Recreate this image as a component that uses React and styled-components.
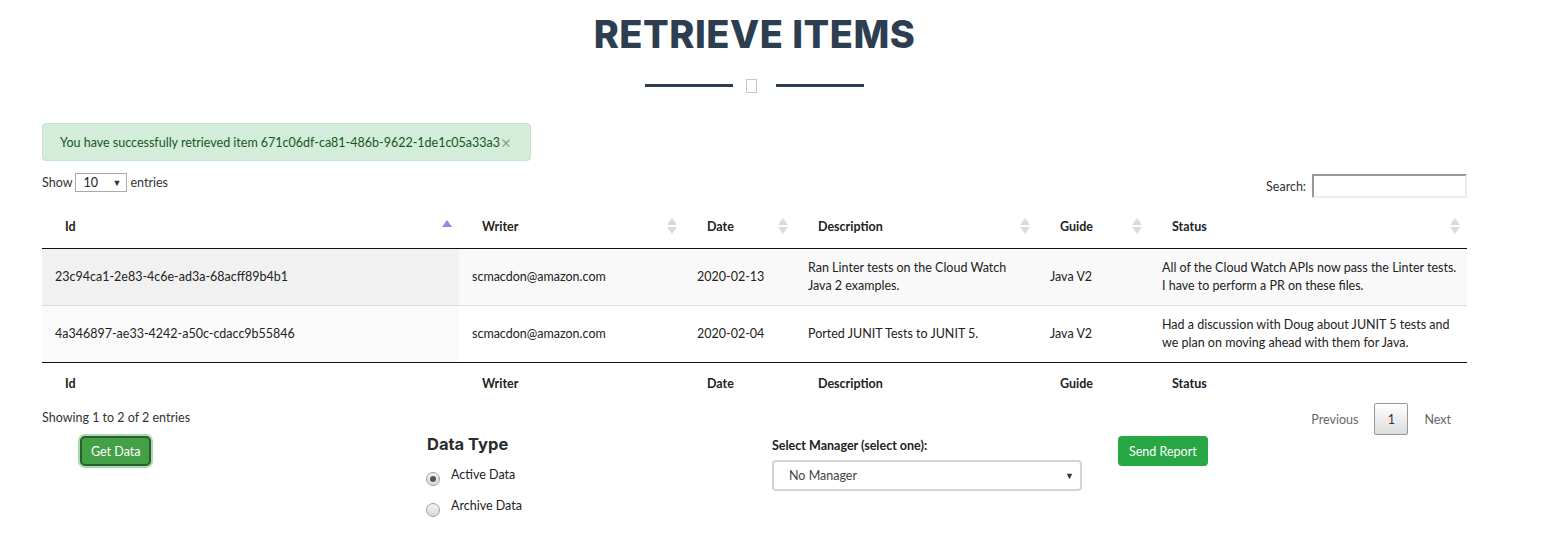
import React from "react";
import styled, { createGlobalStyle } from "styled-components";

const Global = createGlobalStyle`
  html, body { margin: 0; padding: 0; background: #fff; }
  body { font-family: Lato, "Open Sans", sans-serif; font-size: 12.5px; color: #333; }
`;

const Page = styled.div`
  width: 1425px;
  margin-left: 42px;
  padding-top: 12px;
`;

const Title = styled.h1`
  margin: 0;
  text-align: center;
  font-family: Inter, "Open Sans", sans-serif;
  font-weight: 800;
  font-size: 38px;
  line-height: 44px;
  letter-spacing: 0.5px;
  color: #2c3e50;
`;

const Divider = styled.div`
  display: flex;
  justify-content: center;
  align-items: center;
  margin-top: 22px;
  height: 15px;
`;

const Line = styled.span`
  display: block;
  width: 88px;
  height: 3px;
  background: #2c3e50;
`;

const Glyph = styled.span`
  display: block;
  width: 11px;
  height: 14px;
  border: 1px solid #c4c8cc;
  box-sizing: border-box;
  margin: 0 19px 0 13px;
`;

const Alert = styled.div`
  margin-top: 30px;
  width: 489px;
  height: 38px;
  box-sizing: border-box;
  display: flex;
  align-items: center;
  padding: 0 0 0 17px;
  background: #d4edda;
  border: 1px solid #c3e6cb;
  border-radius: 4px;
  color: #155724;
  font-size: 12.5px;
`;

const Close = styled.span`
  color: #8c9990;
  font-size: 17px;
  margin-left: 1px;
  line-height: 1;
  margin-top: 1px;
`;

const Controls = styled.div`
  display: flex;
  justify-content: space-between;
  align-items: flex-start;
  margin-top: 12px;
  height: 32px;
`;

const Length = styled.div`
  display: flex;
  align-items: center;
  gap: 3px;
  color: #333;
`;

const SmallSelect = styled.div`
  width: 52px;
  height: 19px;
  box-sizing: border-box;
  border: 1px solid #a9a9a9;
  display: flex;
  align-items: center;
  justify-content: space-between;
  padding: 0 5px 0 7px;
  color: #222;
  background: #fff;
`;

const Caret = styled.span`
  font-size: 9px;
  color: #333;
`;

const SearchWrap = styled.label`
  display: flex;
  align-items: center;
  gap: 6px;
  margin-top: 1px;
  color: #333;
`;

const SearchInput = styled.div`
  width: 155px;
  height: 24px;
  box-sizing: border-box;
  border-top: 2px solid #9a9a9a;
  border-left: 2px solid #9a9a9a;
  border-right: 2px solid #ececec;
  border-bottom: 2px solid #ececec;
  background: #fff;
`;

const Table = styled.table`
  width: 1425px;
  border-collapse: collapse;
  table-layout: fixed;
  font-size: 12.5px;
`;

const Th = styled.th`
  position: relative;
  text-align: left;
  font-weight: 700;
  color: #222;
  height: 43px;
  padding: 0 18px 0 23px;
  box-sizing: border-box;
  ${(p) => (p.$head ? "border-bottom: 1px solid #111;" : "")}
`;

const SortIcon = styled.span`
  position: absolute;
  right: 6px;
  top: 50%;
  transform: translateY(-50%);
  width: 12px;
  height: 20px;
  display: flex;
  flex-direction: column;
  align-items: center;
  justify-content: center;
  gap: 2px;
`;

const Tri = styled.span`
  width: 0;
  height: 0;
  border-left: 5px solid transparent;
  border-right: 5px solid transparent;
  ${(p) =>
    p.$down
      ? `border-top: 7px solid ${p.$color};`
      : `border-bottom: 7px solid ${p.$color};`}
`;

const Tr = styled.tr`
  background: ${(p) => (p.$odd ? "#f9f9f9" : "#fff")};
  border-bottom: 1px solid ${(p) => (p.$last ? "#111" : "#ddd")};
`;

const Td = styled.td`
  height: 57px;
  padding: 0 6px 0 13px;
  box-sizing: border-box;
  line-height: 18px;
  color: #222;
  vertical-align: middle;
  ${(p) => (p.$sorted ? `background: ${p.$odd ? "#f1f1f1" : "#fafafa"};` : "")}
`;

const Info = styled.div`
  display: flex;
  justify-content: space-between;
  align-items: flex-start;
  height: 26px;
  margin-top: -1px;
`;

const Showing = styled.span`
  margin-top: 6px;
`;

const Pager = styled.div`
  display: flex;
  align-items: center;
  margin-top: -1px;
`;

const PageLink = styled.span`
  color: #666;
  padding: 0 16px;
`;

const PageCurrent = styled.span`
  width: 34px;
  height: 32px;
  box-sizing: border-box;
  display: flex;
  align-items: center;
  justify-content: center;
  border: 1px solid #979797;
  border-radius: 2px;
  background: linear-gradient(#fff, #dcdcdc);
  color: #333;
`;

const Bottom = styled.div`
  display: grid;
  grid-template-columns: repeat(4, 346px);
  margin-left: 38px;
  margin-top: 4px;
  align-items: start;
`;

const Col = styled.div`
  display: flex;
  flex-direction: column;
  align-items: flex-start;
`;

const GetButton = styled.button`
  font-family: Lato, sans-serif;
  font-size: 12.5px;
  color: #fff;
  background: #43a047;
  border: 2px solid #2b5e2d;
  border-radius: 5px;
  height: 30px;
  padding: 0 9px;
  box-shadow: 0 0 0 2px #a8dcae;
  margin-top: 2px;
`;

const SendButton = styled.button`
  font-family: Lato, sans-serif;
  font-size: 12.5px;
  color: #fff;
  background: #28a745;
  border: none;
  border-radius: 4px;
  height: 30px;
  padding: 0 11px;
  margin-top: 2px;
`;

const H4 = styled.div`
  font-family: Inter, "Open Sans", sans-serif;
  font-weight: 700;
  font-size: 16.5px;
  color: #2b2b2b;
  margin-left: 1px;
  line-height: 20px;
  margin-top: 0;
`;

const RadioRow = styled.label`
  display: flex;
  align-items: flex-start;
  gap: 11px;
  margin-top: ${(p) => p.$mt}px;
  color: #333;
  line-height: 16px;
`;

const Radio = styled.span`
  width: 14px;
  height: 14px;
  box-sizing: border-box;
  border-radius: 50%;
  border: 1px solid #a0a0a0;
  background: linear-gradient(#f3f3f3, #d9d9d9);
  display: flex;
  align-items: center;
  justify-content: center;
  margin-top: 5px;
  &::after {
    content: "";
    width: 6px;
    height: 6px;
    border-radius: 50%;
    background: ${(p) => (p.$checked ? "#555" : "transparent")};
  }
`;

const Label = styled.div`
  font-size: 12.5px;
  color: #222;
  line-height: 16px;
  font-weight: ${(p) => (p.$bold ? 700 : 400)};
  margin-top: ${(p) => p.$mt || 0}px;
`;

const ManagerSelect = styled.div`
  margin-top: 6px;
  width: 310px;
  height: 31px;
  box-sizing: border-box;
  border: 2px solid #d4d4d4;
  border-radius: 4px;
  display: flex;
  align-items: center;
  justify-content: space-between;
  padding: 0 6px 0 15px;
  color: #444;
  background: #fff;
`;

const cols = [
  { key: "id", label: "Id", width: 417 },
  { key: "writer", label: "Writer", width: 225 },
  { key: "date", label: "Date", width: 111 },
  { key: "desc", label: "Description", width: 242 },
  { key: "guide", label: "Guide", width: 112 },
  { key: "status", label: "Status", width: 318 },
];

const rows = [
  {
    id: "23c94ca1-2e83-4c6e-ad3a-68acff89b4b1",
    writer: "scmacdon@amazon.com",
    date: "2020-02-13",
    desc: "Ran Linter tests on the Cloud Watch Java 2 examples.",
    guide: "Java V2",
    status: "All of the Cloud Watch APIs now pass the Linter tests. I have to perform a PR on these files.",
  },
  {
    id: "4a346897-ae33-4242-a50c-cdacc9b55846",
    writer: "scmacdon@amazon.com",
    date: "2020-02-04",
    desc: "Ported JUNIT Tests to JUNIT 5.",
    guide: "Java V2",
    status: "Had a discussion with Doug about JUNIT 5 tests and we plan on moving ahead with them for Java.",
  },
];

function Sort({ asc }) {
  return (
    <SortIcon>
      {asc ? (
        <Tri $color="#8c8ce0" style={{ marginTop: -6 }} />
      ) : (
        <>
          <Tri $color="#dadada" />
          <Tri $down $color="#dadada" />
        </>
      )}
    </SortIcon>
  );
}

export default function App() {
  return (
    <Page>
      <Global />
      <Title>RETRIEVE ITEMS</Title>
      <Divider>
        <Line />
        <Glyph />
        <Line />
      </Divider>
      <Alert>
        You have successfully retrieved item 671c06df-ca81-486b-9622-1de1c05a33a3
        <Close>×</Close>
      </Alert>
      <Controls>
        <Length>
          Show
          <SmallSelect>
            10 <Caret>▼</Caret>
          </SmallSelect>
          entries
        </Length>
        <SearchWrap>
          Search:
          <SearchInput />
        </SearchWrap>
      </Controls>
      <Table>
        <colgroup>
          {cols.map((c) => (
            <col key={c.key} style={{ width: c.width }} />
          ))}
        </colgroup>
        <thead>
          <tr>
            {cols.map((c, i) => (
              <Th key={c.key} $head>
                {c.label}
                <Sort asc={i === 0} />
              </Th>
            ))}
          </tr>
        </thead>
        <tbody>
          {rows.map((r, i) => (
            <Tr key={r.id} $odd={i % 2 === 0} $last={i === rows.length - 1}>
              {cols.map((c, j) => (
                <Td key={c.key} $sorted={j === 0} $odd={i % 2 === 0}>
                  {r[c.key]}
                </Td>
              ))}
            </Tr>
          ))}
        </tbody>
        <tfoot>
          <tr>
            {cols.map((c) => (
              <Th key={c.key}>{c.label}</Th>
            ))}
          </tr>
        </tfoot>
      </Table>
      <Info>
        <Showing>Showing 1 to 2 of 2 entries</Showing>
        <Pager>
          <PageLink>Previous</PageLink>
          <PageCurrent>1</PageCurrent>
          <PageLink>Next</PageLink>
        </Pager>
      </Info>
      <Bottom>
        <Col>
          <GetButton>Get Data</GetButton>
        </Col>
        <Col>
          <H4>Data Type</H4>
          <RadioRow $mt={13}>
            <Radio $checked />
            <Label>Active Data</Label>
          </RadioRow>
          <RadioRow $mt={12}>
            <Radio />
            <Label>Archive Data</Label>
          </RadioRow>
        </Col>
        <Col>
          <Label $bold $mt={4}>Select Manager (select one):</Label>
          <ManagerSelect>
            No Manager <Caret>▼</Caret>
          </ManagerSelect>
        </Col>
        <Col>
          <SendButton>Send Report</SendButton>
        </Col>
      </Bottom>
    </Page>
  );
}
